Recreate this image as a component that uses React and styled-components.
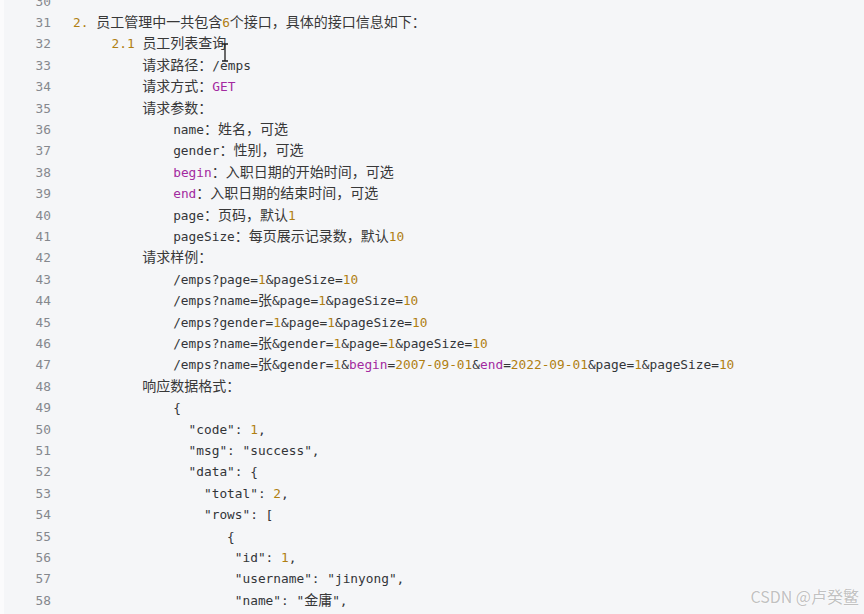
import React from 'react';
import styled, { createGlobalStyle } from 'styled-components';

const GlobalStyle = createGlobalStyle`
    html, body {
        margin: 0;
        padding: 0;
        background: #f5f6f8;
    }
`;

const Editor = styled.div`
    position: relative;
    height: 614px;
    overflow: hidden;
    background: #f5f6f8;
    border-left: 4px solid #fbfbfc;
`;

const Lines = styled.div`
    margin-top: -9.5px;
`;

const Row = styled.div`
    display: grid;
    grid-template-columns: 47px 1fr;
    column-gap: 22px;
    height: 21.41px;
    line-height: 21.41px;
    font-family: "DejaVu Sans Mono", monospace;
    font-size: 12.8px;
`;

const LineNo = styled.div`
    text-align: right;
    color: #85888d;
`;

const Code = styled.div`
    white-space: pre;
    color: #333538;
`;

const Cjk = styled.span`
    font-family: "Noto Sans CJK SC", sans-serif;
    font-size: 14px;
    line-height: 1;
    color: #383838;
`;

const Tok = styled.span`
    color: ${p => (p.$kind === 'num' ? '#b07f12' : '#a32aa0')};
`;

const Cursor = styled.svg`
    position: absolute;
    left: 216px;
    top: 43px;
`;

const Watermark = styled.div`
    position: absolute;
    right: 5px;
    bottom: 6px;
    font-family: "Noto Sans CJK SC", sans-serif;
    font-size: 16px;
    color: rgba(140, 140, 140, 0.55);
    text-shadow: 0 0 2px #fff, 0 0 1px #fff;
`;

const n = t => ({ t, k: 'num' });
const k = t => ({ t, k: 'kw' });

const I1 = '         ';
const I2 = '             ';

const lines = [
    [''],
    [n('2.'), ' 员工管理中一共包含', n('6'), '个接口，具体的接口信息如下：'],
    ['     ', n('2.1'), ' 员工列表查询'],
    [I1 + '请求路径：/emps'],
    [I1 + '请求方式：', k('GET')],
    [I1 + '请求参数：'],
    [I2 + 'name：姓名，可选'],
    [I2 + 'gender：性别，可选'],
    [I2, k('begin'), '：入职日期的开始时间，可选'],
    [I2, k('end'), '：入职日期的结束时间，可选'],
    [I2 + 'page：页码，默认', n('1')],
    [I2 + 'pageSize：每页展示记录数，默认', n('10')],
    [I1 + '请求样例：'],
    [I2 + '/emps?page=', n('1'), '&pageSize=', n('10')],
    [I2 + '/emps?name=张&page=', n('1'), '&pageSize=', n('10')],
    [I2 + '/emps?gender=', n('1'), '&page=', n('1'), '&pageSize=', n('10')],
    [I2 + '/emps?name=张&gender=', n('1'), '&page=', n('1'), '&pageSize=', n('10')],
    [I2 + '/emps?name=张&gender=', n('1'), '&', k('begin'), '=', n('2007-09-01'), '&', k('end'), '=', n('2022-09-01'), '&page=', n('1'), '&pageSize=', n('10')],
    [I1 + '响应数据格式：'],
    [I2 + '{'],
    [I2 + '  "code": ', n('1'), ','],
    [I2 + '  "msg": "success",'],
    [I2 + '  "data": {'],
    [I2 + '    "total": ', n('2'), ','],
    [I2 + '    "rows": ['],
    [I2 + '       {'],
    [I2 + '        "id": ', n('1'), ','],
    [I2 + '        "username": "jinyong",'],
    [I2 + '        "name": "金庸",'],
];

const CJK_RE = /([\u3000-\u9fff\uff00-\uffef]+)/;

function Plain({ text }) {
    return text.split(CJK_RE).map((part, i) =>
        i % 2 === 1 ? <Cjk key={i}>{part}</Cjk> : part
    );
}

export default function App() {
    return (
        <>
            <GlobalStyle />
            <Editor>
                <Lines>
                    {lines.map((segs, i) => (
                        <Row key={i}>
                            <LineNo>{30 + i}</LineNo>
                            <Code>
                                {segs.map((s, j) =>
                                    typeof s === 'string'
                                        ? <Plain key={j} text={s} />
                                        : <Tok key={j} $kind={s.k}>{s.t}</Tok>
                                )}
                            </Code>
                        </Row>
                    ))}
                </Lines>
                <Cursor width="10" height="19" viewBox="0 0 10 19">
                    <path d="M2 1 H8 M5 1 V18 M2 18 H8" stroke="#1e1e1e" strokeWidth="1.3" fill="none" />
                </Cursor>
                <Watermark>CSDN @卢癸鳘</Watermark>
            </Editor>
        </>
    );
}
